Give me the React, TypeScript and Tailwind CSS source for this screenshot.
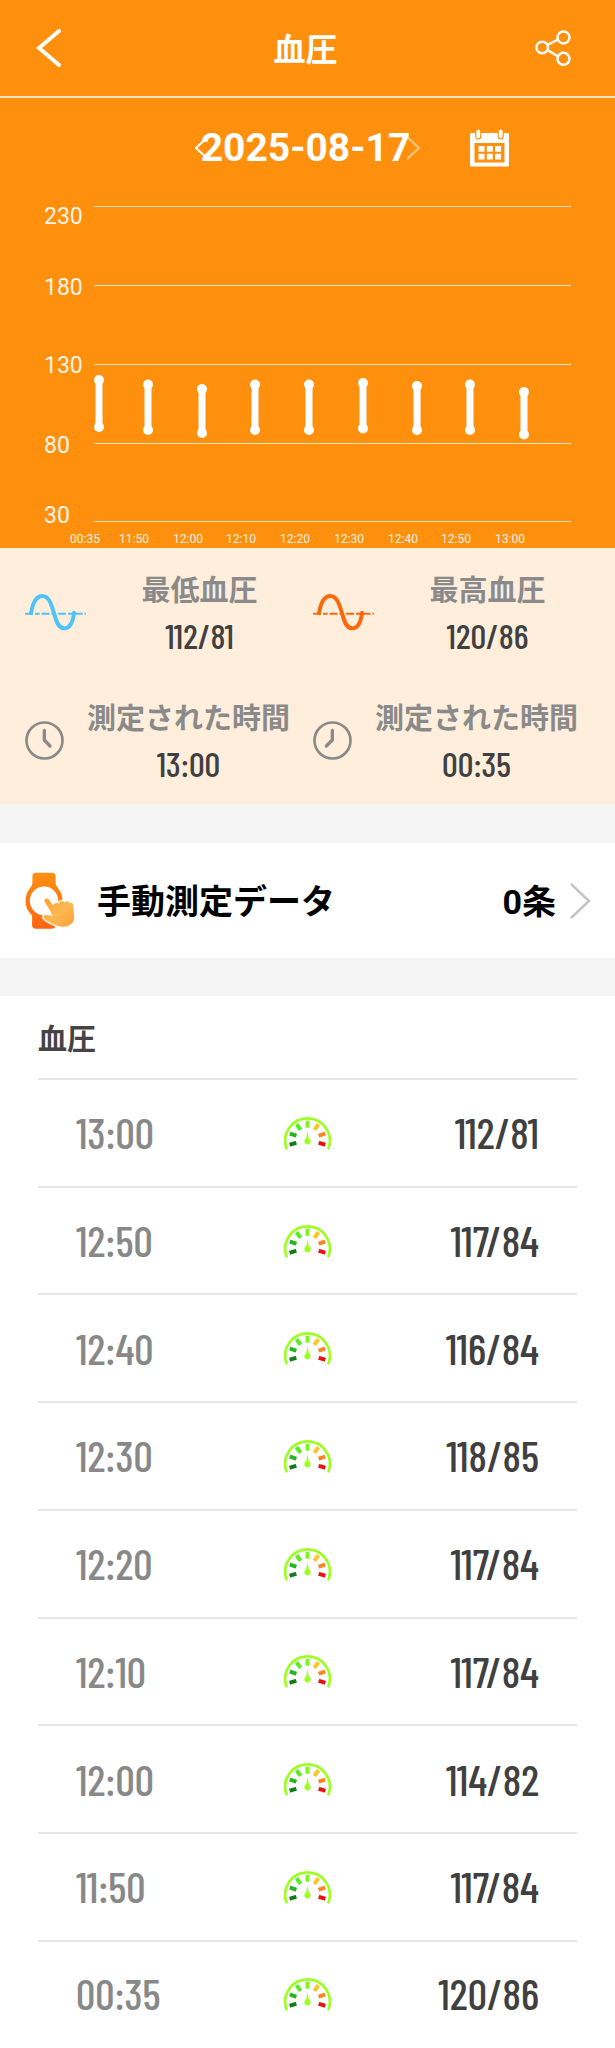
import React from "react";

type Reading = {
  time: string;
  high: number;
  low: number;
};

// newest first, the chart draws them the other way round
const readings: Reading[] = [
  { time: "13:00", high: 112, low: 81 },
  { time: "12:50", high: 117, low: 84 },
  { time: "12:40", high: 116, low: 84 },
  { time: "12:30", high: 118, low: 85 },
  { time: "12:20", high: 117, low: 84 },
  { time: "12:10", high: 117, low: 84 },
  { time: "12:00", high: 114, low: 82 },
  { time: "11:50", high: 117, low: 84 },
  { time: "00:35", high: 120, low: 86 },
];

const gridLines = [
  { value: 230, y: 9, labelY: 26 },
  { value: 180, y: 88, labelY: 97 },
  { value: 130, y: 167, labelY: 175 },
  { value: 80, y: 246, labelY: 255 },
  { value: 30, y: 324, labelY: 325 },
];

const barX = [99, 148, 202, 255, 309, 363, 417, 470, 524];

function BackIcon() {
  return (
    <svg viewBox="0 0 26 40" className="h-10 w-[26px]" fill="none" stroke="currentColor" strokeWidth="4" strokeLinecap="round">
      <path d="M23 3 L3 20 L23 37" />
    </svg>
  );
}

function ShareIcon() {
  return (
    <svg viewBox="0 0 36 36" className="size-9" fill="none" stroke="currentColor" strokeWidth="2.4">
      <circle cx="7.2" cy="17.5" r="5.8" />
      <circle cx="28.5" cy="7.5" r="6" />
      <circle cx="28.5" cy="28.8" r="6" />
      <path d="M12.5 15 L23 9.5 M12.5 20 L23 26.5" />
    </svg>
  );
}

function CalendarIcon() {
  return (
    <svg viewBox="0 0 39 38" className="h-[38px] w-[39px]">
      <rect x="0" y="4" width="39" height="33.5" rx="1.5" fill="#fff" />
      <rect x="4.5" y="14" width="30" height="19.5" fill="#ff900d" />
      <g fill="#fff" stroke="#ff900d" strokeWidth="1.2">
        <rect x="5.8" y="0" width="5" height="10" rx="2.5" />
        <rect x="28.2" y="0" width="5" height="10" rx="2.5" />
      </g>
      <g fill="#fff">
        {[8.5, 16.8, 25.1].map((x) => (
          <React.Fragment key={x}>
            <rect x={x} y="17" width="6" height="5.8" rx="0.6" />
            <rect x={x} y="24.8" width="6" height="5.8" rx="0.6" />
          </React.Fragment>
        ))}
      </g>
    </svg>
  );
}

function WaveIcon({ color }: { color: string }) {
  return (
    <svg viewBox="75 142 184 118" className="h-[39px] w-[61px] shrink-0" fill="none" stroke={color}>
      <path d="M75 205 H259" strokeWidth="6" strokeDasharray="24 6 14 6" />
      <path
        d="M93 203 C99 166 112 151 127 151 C148 151 155 178 163 205 C170 233 178 249 194 249 C212 249 220 228 223 202"
        strokeWidth="12"
        strokeLinecap="round"
      />
    </svg>
  );
}

function ClockIcon({ hands }: { hands: string }) {
  return (
    <svg viewBox="0 0 117 117" className="size-[39px] shrink-0" fill="none" stroke="#8a8a8a">
      <circle cx="58.5" cy="58.5" r="54" strokeWidth="8" />
      <path d={hands} strokeWidth="10" strokeLinecap="round" strokeLinejoin="round" />
    </svg>
  );
}

function WatchIcon() {
  return (
    <svg viewBox="76 33 150 172" className="h-[57px] w-[50px] shrink-0">
      <defs>
        <linearGradient id="watch" x1="0" y1="0" x2="0" y2="1">
          <stop offset="0" stopColor="#ff9012" />
          <stop offset="1" stopColor="#ff650f" />
        </linearGradient>
        <linearGradient id="hand" x1="0" y1="0" x2="1" y2="1">
          <stop offset="0" stopColor="#ff9b38" />
          <stop offset="0.5" stopColor="#ffb950" />
          <stop offset="1" stopColor="#ff9c3a" />
        </linearGradient>
      </defs>
      <path
        d="M98 46 Q98 35 109 35 H157 Q168 35 168 46 V68 Q170 76 176 83 Q189 99 189 120 Q189 145 168 164 V194 Q168 204 157 204 H108 Q97 204 97 194 V164 Q77 146 77 120 Q77 99 90 82 Q98 74 98 66 Z"
        fill="url(#watch)"
      />
      <circle cx="133" cy="120" r="43" fill="#fff" />
      <path
        d="M132 122 C131 110 145 107 150 116 L160 130 C166 124 172 122 177 126 C181 117 190 117 195 122 C201 117 208 119 211 125 C217 122 223 127 223 135 L226 168 C228 190 205 203 186 200 C170 199 152 190 134 178 C124 168 130 159 142 161 L156 164 L146 145 Z"
        fill="url(#hand)"
        stroke="#fff"
        strokeWidth="4"
      />
    </svg>
  );
}

const ticks = [
  { angle: -107, color: "#127c18" },
  { angle: -72, color: "#25b522" },
  { angle: -36, color: "#55ee22" },
  { angle: 0, color: "#80f520" },
  { angle: 36, color: "#ffc526" },
  { angle: 72, color: "#ff8420" },
  { angle: 107, color: "#ee1010" },
];

function GaugeIcon() {
  return (
    <svg viewBox="-70 -70 140 102" className="mx-auto h-[34px] w-[47px]">
      <path d="M-63 27 A67 67 0 1 1 63 27" fill="none" stroke="#9dff20" strokeWidth="8" strokeLinecap="round" />
      {ticks.map((t) => (
        <rect key={t.angle} x="-6" y="-56" width="12" height="21" rx="1" fill={t.color} transform={`rotate(${t.angle})`} />
      ))}
      <path d="M0 -25 L4 -3 A9.5 9.5 0 1 1 -4 -3 Z" fill="#9dff20" />
    </svg>
  );
}

function Chart() {
  const points = [...readings].reverse();
  return (
    <svg viewBox="0 0 615 350" className="block w-full font-['Roboto',sans-serif]" role="img" aria-label="血圧">
      {gridLines.map((g) => (
        <g key={g.value}>
          <path d={`M94 ${g.y - 0.5} H571`} stroke="#fff" strokeOpacity="0.75" strokeWidth="1" />
          <text x="44" y={g.labelY} fontSize="23" fill="#fff" fillOpacity="0.92">
            {g.value}
          </text>
        </g>
      ))}
      {points.map((p, i) => {
        const top = 182 + (120 - p.high) * 1.5;
        const bottom = 229 + (86 - p.low) * 1.5;
        return (
          <g key={p.time} fill="#fff">
            <path d={`M${barX[i]} ${top} V${bottom}`} stroke="#fff" strokeWidth="7" />
            <circle cx={barX[i]} cy={top} r="5" />
            <circle cx={barX[i]} cy={bottom} r="5" />
            <text x={barX[i] - 14} y="345" fontSize="12" textAnchor="middle" fillOpacity="0.92">
              {p.time}
            </text>
          </g>
        );
      })}
    </svg>
  );
}

function Stat({ icon, label, value }: { icon: React.ReactNode; label: string; value: string }) {
  return (
    <div className="flex h-32 items-center">
      {icon}
      <dl className="flex-1 pt-0.5 text-center leading-[44px]">
        <dt className="text-[29px] font-bold whitespace-nowrap text-[#8a8a8a]">{label}</dt>
        <dd className="font-['Barlow_Condensed','Roboto',sans-serif] text-[35px] font-medium text-[#404040]">{value}</dd>
      </dl>
    </div>
  );
}

export default function App() {
  return (
    <div className="min-h-screen bg-[#f5f5f5] font-['Roboto','Noto_Sans_CJK_JP',sans-serif]">
      <div className="bg-[#ff900d] text-white">
        <header className="flex h-[98px] items-center justify-between border-b-2 border-[#ffe6c4] pr-11 pl-9">
          <button type="button" aria-label="戻る" className="w-10">
            <BackIcon />
          </button>
          <h1 className="pt-1 text-[32px] font-bold">血圧</h1>
          <button type="button" aria-label="共有">
            <ShareIcon />
          </button>
        </header>

        <div className="grid h-[100px] grid-cols-[1fr_auto_1fr] items-center">
          <div className="col-start-2 flex items-center">
            <button type="button" aria-label="前の日" className="-mr-2">
              <svg viewBox="0 0 14 24" className="h-6 w-3.5" fill="none" stroke="currentColor" strokeWidth="2">
                <path d="M13 1 L1 12 L13 23" />
              </svg>
            </button>
            <time className="text-[39px] leading-none font-bold">2025-08-17</time>
            <button type="button" aria-label="次の日" className="-ml-1 opacity-50">
              <svg viewBox="0 0 14 24" className="h-6 w-3.5" fill="none" stroke="currentColor" strokeWidth="2">
                <path d="M1 1 L13 12 L1 23" />
              </svg>
            </button>
          </div>
          <button type="button" aria-label="カレンダー" className="ml-[50px] justify-self-start">
            <CalendarIcon />
          </button>
        </div>

        <Chart />
      </div>

      <section className="grid grid-cols-2 bg-[#ffeedc] pr-3.5 pl-[25px]">
        <Stat icon={<WaveIcon color="#4fc3f7" />} label="最低血圧" value="112/81" />
        <Stat icon={<WaveIcon color="#f96a0c" />} label="最高血圧" value="120/86" />
        <Stat icon={<ClockIcon hands="M58 28 V57 L75 75" />} label="測定された時間" value="13:00" />
        <Stat icon={<ClockIcon hands="M58 28 V57 L40 75" />} label="測定された時間" value="00:35" />
      </section>

      <a href="#manual" className="mt-[39px] flex h-[115px] items-center bg-white pr-6 pl-[25px] text-[34px] font-bold text-black">
        <WatchIcon />
        <span className="ml-[22px] flex-1 pt-1">手動測定データ</span>
        <span className="mr-3.5 pt-1">0条</span>
        <svg viewBox="0 0 21 36" className="h-9 w-[21px]" fill="none" stroke="#c4c4c4" strokeWidth="2.5">
          <path d="M1 1 L19 18 L1 35" />
        </svg>
      </a>

      <section className="mt-[38px] bg-white px-[38px] pb-0.5">
        <h2 id="list-title" className="h-[82px] text-[29px] leading-[88px] font-bold text-[#444]">
          血圧
        </h2>
        <table aria-labelledby="list-title" className="h-[968px] w-full table-fixed">
          <tbody>
            {readings.map((r) => (
              <tr
                key={r.time}
                className="border-t-2 border-[#e6e6e6] font-['Barlow_Condensed','Roboto',sans-serif] text-[43px] leading-none font-medium"
              >
                <th scope="row" className="pl-[38px] text-left font-medium text-[#888]">
                  {r.time}
                </th>
                <td>
                  <GaugeIcon />
                </td>
                <td className="pr-[38px] text-right text-[#404040]">
                  {r.high}/{r.low}
                </td>
              </tr>
            ))}
          </tbody>
        </table>
      </section>
    </div>
  );
}
